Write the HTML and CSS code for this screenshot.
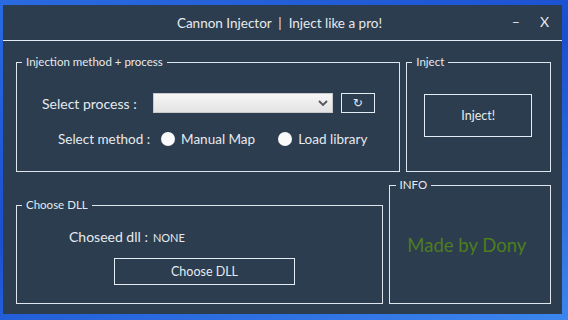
FILE: index.html
```html
<!DOCTYPE html>
<html lang="en">
<head>
  <meta charset="UTF-8">
  <title>Cannon Injector</title>
  <link rel="stylesheet" href="styles.css">
</head>
<body>
  <div class="window">
    <div class="titlebar">
      <span class="title">Cannon Injector&nbsp; | &nbsp;Inject like a pro!</span>
      <span class="controls"><span class="min">–</span><span class="close">X</span></span>
    </div>
    <div class="content">
      <div class="row top-row">
        <fieldset class="group process-group">
          <legend>Injection method + process</legend>
          <div class="process-line">
            <span class="label wide">Select process :</span>
            <div class="select">
              <svg width="10" height="7" viewBox="0 0 10 7"><path d="M1 1 L5 5 L9 1" fill="none" stroke="#555" stroke-width="1.8"/></svg>
            </div>
            <button class="refresh">↻</button>
          </div>
          <div class="method-line">
            <span class="label">Select method :</span>
            <span class="radio"></span><span class="opt">Manual Map</span>
            <span class="radio second"></span><span class="opt">Load library</span>
          </div>
        </fieldset>
        <fieldset class="group inject-group">
          <legend>Inject</legend>
          <button class="btn inject-btn">Inject!</button>
        </fieldset>
      </div>
      <div class="row bottom-row">
        <fieldset class="group dll-group">
          <legend>Choose DLL</legend>
          <div class="dll-line"><span class="label big">Choseed dll :</span> <span class="none">NONE</span></div>
          <button class="btn dll-btn">Choose DLL</button>
        </fieldset>
        <fieldset class="group info-group">
          <legend>INFO</legend>
          <div class="credit">Made by Dony</div>
        </fieldset>
      </div>
    </div>
  </div>
</body>
</html>
```

FILE: styles.css
```css
body {
  margin: 0;
  width: 568px;
  height: 320px;
  overflow: hidden;
  background: linear-gradient(160deg, #2a6be0 0%, #1a4fcf 45%, #3b86ee 100%);
  font-family: Lato, "Open Sans", sans-serif;
  color: #e6eaee;
}
.window {
  margin: 5px 0 0 3px;
  width: 559px;
  height: 309px;
  background-color: #2c3d4f;
}
.titlebar {
  height: 35px;
  border-bottom: 1px solid #e4ebf2;
  display: flex;
  align-items: center;
  justify-content: center;
  position: relative;
}
.title {
  font-size: 13.5px;
  margin-left: -6px;
}
.controls {
  position: absolute;
  right: 13px;
  top: 8px;
  font-size: 14px;
  display: flex;
  gap: 20px;
}
.content {
  padding: 14px 11px 0 13px;
}
.row {
  display: flex;
  gap: 6px;
}
.bottom-row {
  margin-top: 6px;
  align-items: flex-end;
}
.group {
  margin: 0;
  padding: 0;
  border: 1px solid #dfe6ed;
  box-sizing: border-box;
  min-width: 0;
}
.group legend {
  margin-left: 5px;
  padding: 0 4px;
  font-size: 11.5px;
  line-height: 14px;
}
.info-group legend {
  margin-left: 6px;
}
.process-group {
  width: 385px;
  height: 117px;
}
.inject-group {
  width: 145px;
  height: 117px;
}
.dll-group {
  width: 368px;
  height: 106px;
}
.info-group {
  width: 163px;
  height: 126px;
  display: flex;
  flex-direction: column;
}
.label {
  font-size: 13.5px;
}
.label.wide {
  font-size: 14px;
}
.process-line {
  display: flex;
  align-items: center;
  margin-top: 24px;
  padding-left: 25px;
  height: 20px;
}
.select {
  margin-left: 16px;
  width: 180px;
  height: 20px;
  box-sizing: border-box;
  border: 1px solid #c9c9c9;
  background: linear-gradient(#f6f6f6, #e3e3e3);
  display: flex;
  align-items: center;
  justify-content: flex-end;
  padding-right: 4px;
}
.refresh {
  margin-left: 8px;
  width: 34px;
  height: 20px;
  background: none;
  border: 1px solid #e4ebf2;
  color: #e6eaee;
  font-size: 12px;
  padding: 0;
  font-family: "DejaVu Sans", sans-serif;
}
.method-line {
  display: flex;
  align-items: center;
  margin-top: 16px;
  padding-left: 41px;
  height: 20px;
}
.radio {
  width: 14px;
  height: 14px;
  border-radius: 50%;
  background-color: #fafafa;
  margin-left: 11px;
}
.radio.second {
  margin-left: 23px;
}
.opt {
  font-size: 13.5px;
  margin-left: 6px;
}
.btn {
  background: none;
  border: 1px solid #e4ebf2;
  color: #e6eaee;
  font-family: Lato, "Open Sans", sans-serif;
  padding: 0;
}
.inject-btn {
  margin: 25px 0 0 17px;
  width: 108px;
  height: 43px;
  font-size: 12.5px;
}
.dll-line {
  margin-top: 16px;
  padding-left: 52px;
  display: flex;
  align-items: baseline;
}
.label.big {
  font-size: 14px;
}
.none {
  font-size: 11px;
  margin-left: 5px;
}
.dll-btn {
  margin: 13px 0 0 97px;
  width: 181px;
  height: 27px;
  font-size: 12.5px;
}
.credit {
  flex: 1;
  display: flex;
  align-items: center;
  justify-content: center;
  color: #4d7d1d;
  font-size: 18.5px;
  padding: 0 6px 6px 0;
}
```
